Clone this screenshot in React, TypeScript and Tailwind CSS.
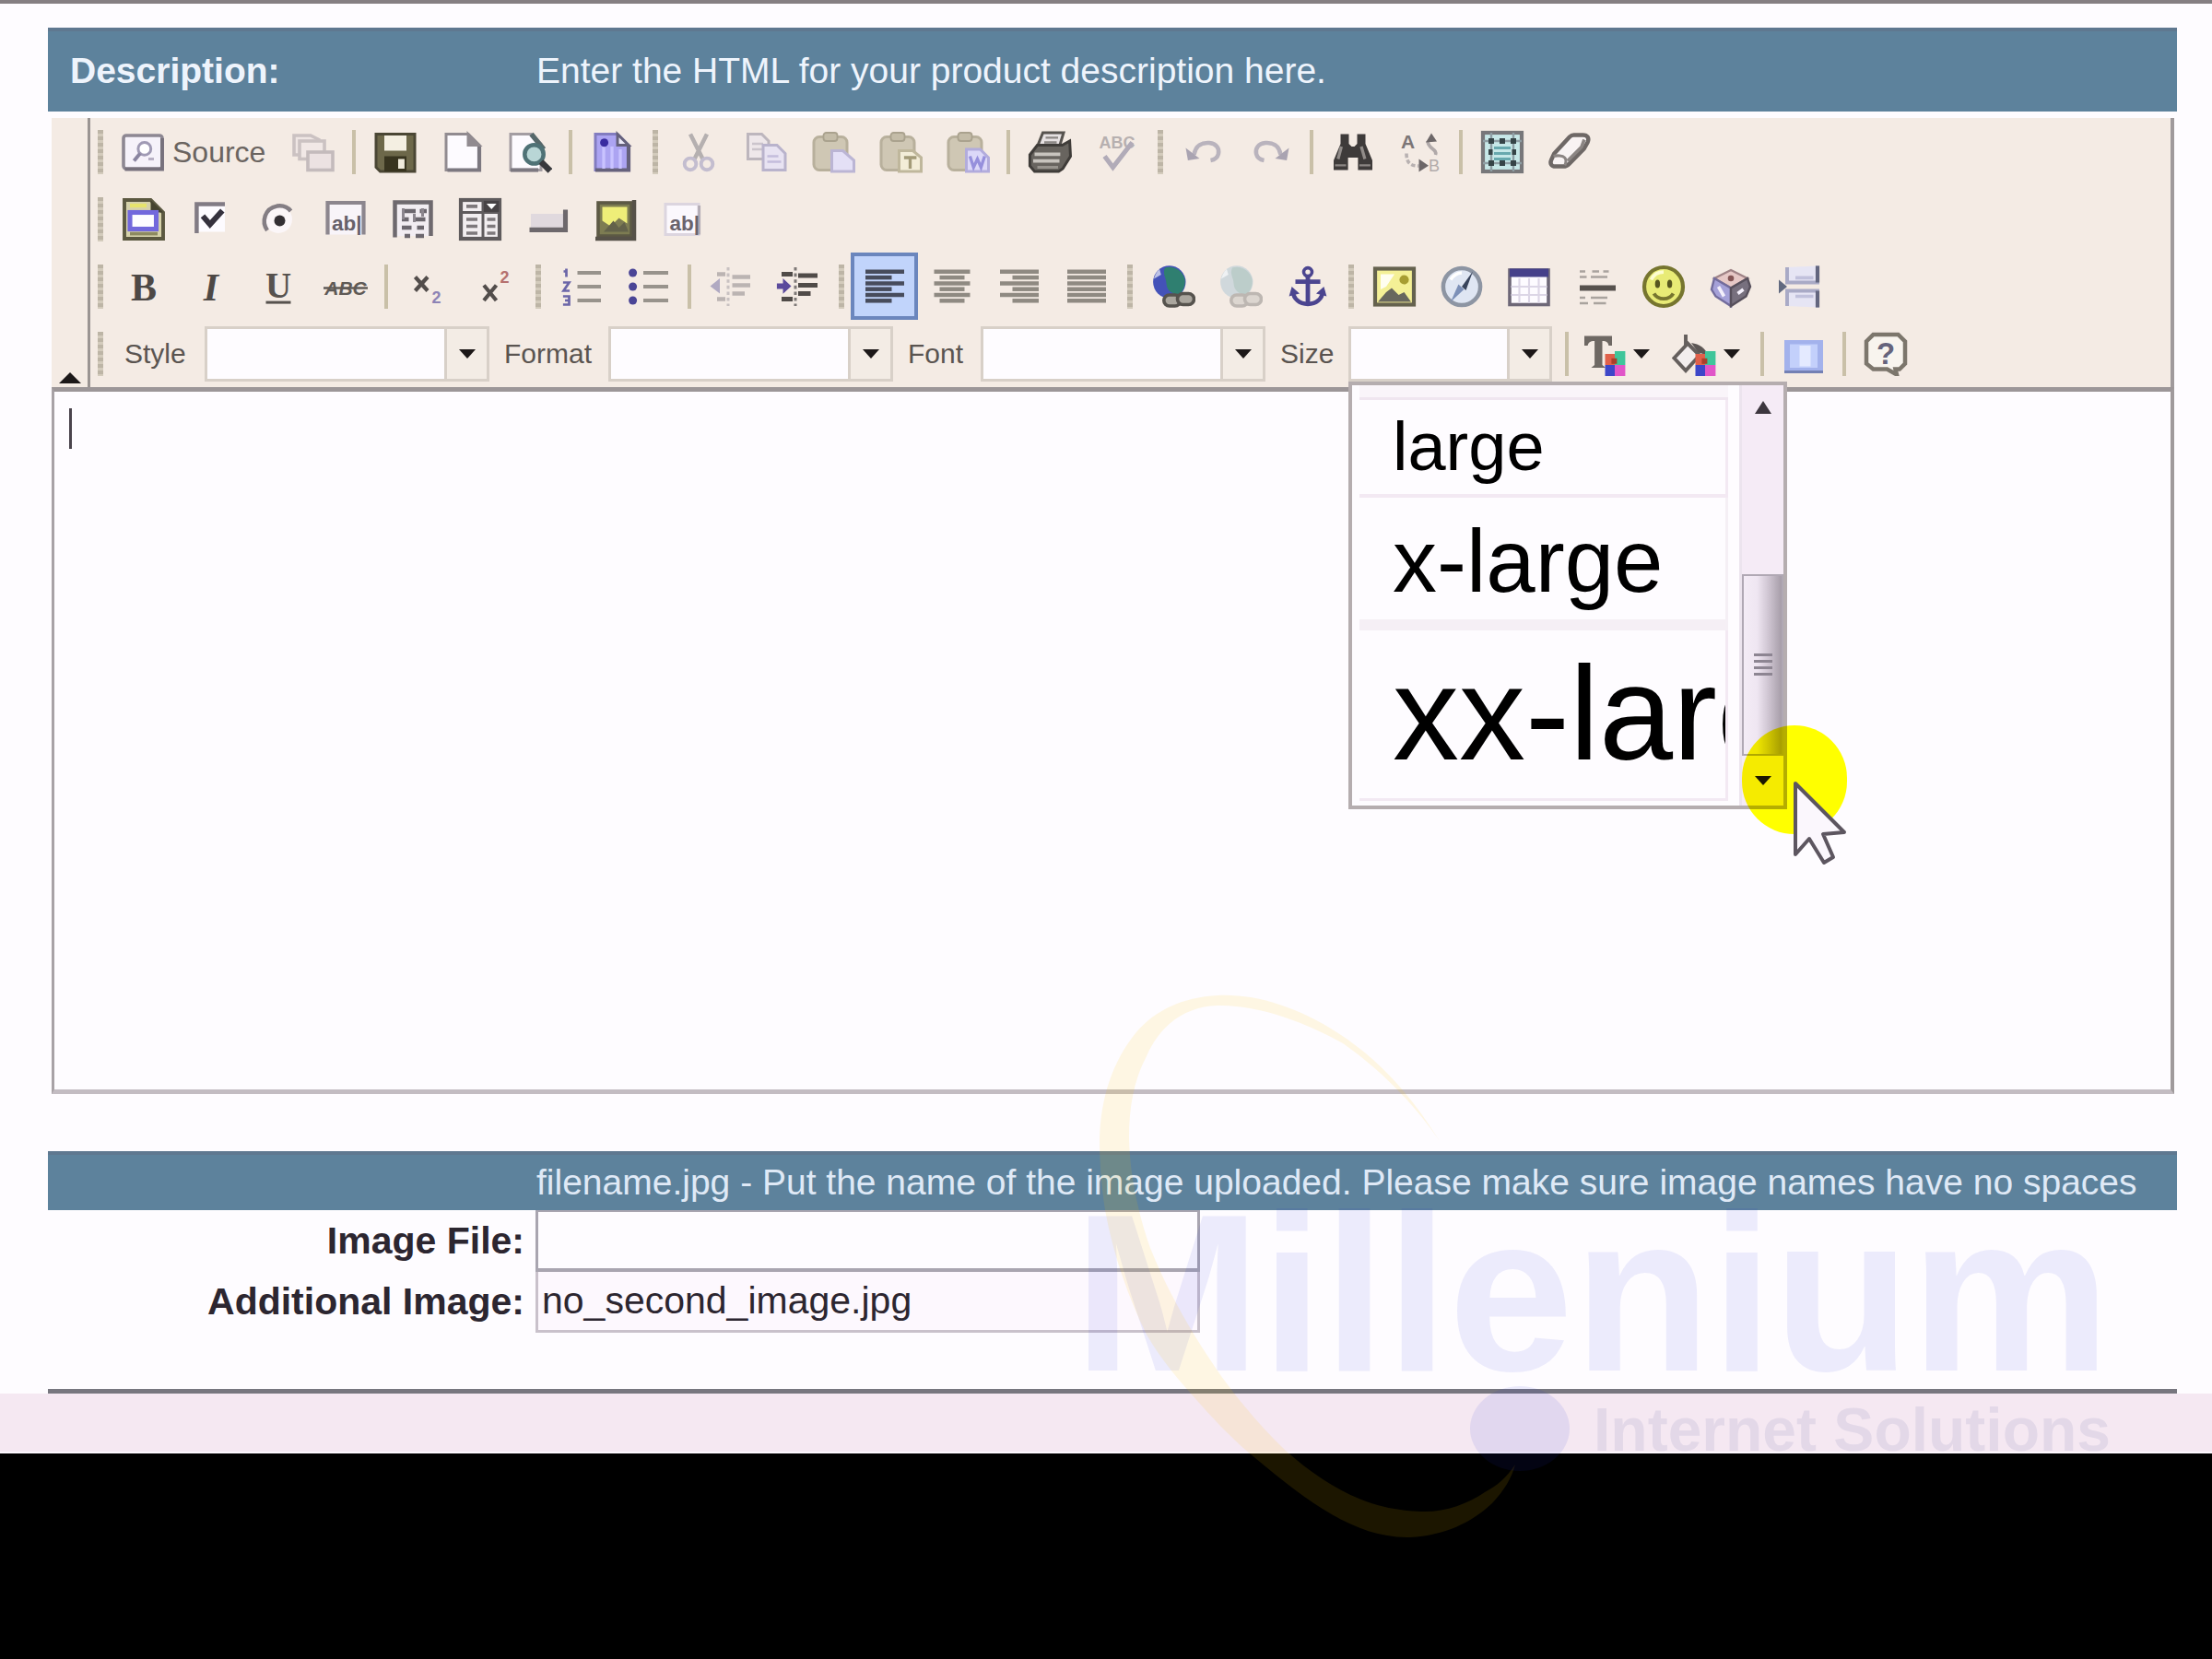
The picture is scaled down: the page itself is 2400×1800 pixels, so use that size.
import React from "react";

const SERIF = '"Liberation Serif", serif';
const SANS = '"Liberation Sans", sans-serif';

function Icon({ children }: { children: React.ReactNode }) {
  return (
    <svg viewBox="0 0 16 16" className="h-12 w-12 shrink-0" fill="none" aria-hidden="true">
      {children}
    </svg>
  );
}

function Tool({ label, active, children }: { label: string; active?: boolean; children: React.ReactNode }) {
  return (
    <button
      type="button"
      aria-label={label}
      title={label}
      className={
        active
          ? "flex h-[73px] w-[73px] shrink-0 items-center justify-center border-4 border-[#6b86bd] bg-[#c1d4fb]"
          : "flex h-[73px] w-[73px] shrink-0 items-center justify-center"
      }
    >
      <Icon>{children}</Icon>
    </button>
  );
}

function Grip() {
  return (
    <span className="flex w-[21px] shrink-0 items-center justify-center">
      <span className="h-12 w-[6px] bg-[repeating-linear-gradient(to_bottom,#bdb5a6_0px,#bdb5a6_4px,#d3cbbc_4px,#d3cbbc_7px)]" />
    </span>
  );
}

function Sep() {
  return (
    <span className="flex w-4 shrink-0 items-center justify-center">
      <span className="h-12 w-1 bg-[#c9c0a8]" />
    </span>
  );
}

function Row({ children }: { children: React.ReactNode }) {
  return (
    <div className="flex h-[73px] items-center">
      <Grip />
      {children}
    </div>
  );
}

function Arrow() {
  return (
    <svg viewBox="0 0 18 10" className="h-[10px] w-[18px]" aria-hidden="true">
      <path d="M0 0h18L9 10z" fill="#1c1818" />
    </svg>
  );
}

function Combo({
  id,
  label,
  labelClass,
  width,
  children,
}: {
  id: string;
  label: string;
  labelClass: string;
  width: string;
  children?: React.ReactNode;
}) {
  return (
    <>
      <label htmlFor={id} className={"shrink-0 text-[30px] text-[#5a5450] " + labelClass}>
        {label}
      </label>
      <div className={"relative h-[60px] shrink-0 " + width}>
        <select
          id={id}
          className="h-full w-full appearance-none border-[3px] border-[#d8d0c8] bg-[#fefcff] px-3 text-[30px] outline-none"
        >
          <option value="" />
        </select>
        <span className="pointer-events-none absolute inset-y-[3px] right-[3px] flex w-[46px] items-center justify-center border-l-[3px] border-[#d8d0c8] bg-[#f3ece5]">
          <Arrow />
        </span>
        {children}
      </div>
    </>
  );
}

const page = (stroke: string) => (
  <>
    <path d="M2 1.5h8l4 4v9H2z" fill="#fdfbff" stroke={stroke} />
    <path d="M10 1.5v4h4z" fill={stroke} stroke={stroke} />
    <path d="M2.5 14.5h11.5V6" stroke="#7c7880" strokeWidth="1.4" />
  </>
);

const clipboard = (
  <>
    <rect x="1" y="2.5" width="12" height="12" rx="2" fill="#cfc7b4" stroke="#b8b09c" />
    <rect x="4.5" y="1" width="5" height="3" rx="1" fill="#c4bca8" stroke="#aaa28e" strokeWidth=".6" />
  </>
);

const swatches = (
  <>
    <path d="M8.5 8h3.5v4H8.5z" fill="#e0604a" />
    <path d="M12 7h3.8v5H12z" fill="#3fc59a" />
    <path d="M8.5 12H12v4H8.5z" fill="#3d46c8" />
    <path d="M12 12h3.8v4H12z" fill="#e055c8" />
    <path d="M10.8 9.6h2v2h-2z" fill="#a8402a" />
  </>
);

const globe = (sea: string, land: string, link: string, linkFill: string) => (
  <>
    <circle cx="6.6" cy="6.3" r="5.9" fill={sea} />
    <path d="M5 1.2c3-1 6.5 1 7.2 4.2.3 2.2-.6 4.2-2.2 5.6-2.8-.4-4.4-1.8-4.5-4.2C5.4 4.6 4 3.5 5 1.2z" fill={land} />
    <path d="M3 1.7c-1 1-1.7 2.2-2 3.5l2.6-1.5z" fill="#fff" opacity=".65" />
    <rect x="4.6" y="11" width="6" height="4" rx="2" fill={linkFill} stroke={link} strokeWidth="1.2" />
    <rect x="9.5" y="10.5" width="6" height="4" rx="2" fill={linkFill} stroke={link} strokeWidth="1.2" />
  </>
);

/* Six text rows, alternating between a wide and a narrow extent. */
const lines = (wide: [number, number], narrow: [number, number], color: string) => (
  <>
    {[0, 1, 2, 3, 4, 5].map((i) => {
      const [from, to] = i % 2 === 0 ? wide : narrow;
      return <path key={i} d={`M${from} ${2.6 + i * 2.1}H${to}`} stroke={color} strokeWidth="1.5" />;
    })}
  </>
);

function Toolbar() {
  return (
    <div className="flex border-r-4 border-[#a09a9c] bg-[#f4ebe4]">
      <button
        type="button"
        aria-label="Collapse toolbar"
        className="flex w-[42px] shrink-0 items-end justify-center border-r-[3px] border-[#9a9492] pb-1"
      >
        <svg viewBox="0 0 24 12" className="h-3 w-6" aria-hidden="true">
          <path d="M0 12 12 0l12 12z" fill="#1c1818" />
        </svg>
      </button>
      <div className="min-w-0 flex-1">
        <Row>
          <button type="button" className="flex h-[73px] w-[184px] shrink-0 items-center gap-2 pl-3 text-[32px] text-[#6a6460]">
            <Icon>
              <rect x="1" y="2" width="14" height="12" rx="1" fill="#f6f2fa" stroke="#8d8792" strokeWidth="1.2" />
              <path d="M1.5 14.2H15V3" stroke="#77717c" strokeWidth="1.3" />
              <circle cx="8.6" cy="6.8" r="2.3" fill="#fff" stroke="#a09ab4" />
              <path d="M7 8.5 4.8 11.2" stroke="#8a84a0" strokeWidth="1.3" />
              <path d="M10 10.5h2" stroke="#b8b0c4" />
            </Icon>
            Source
          </button>
          <Tool label="Templates">
            <path d="M1 2h6l3 1.500V9H1z" fill="#efe6e4" stroke="#cbc2c2" strokeWidth="1.2" />
            <rect x="3" y="4" width="9" height="6.5" fill="#f1e8e6" stroke="#cbc2c2" strokeWidth="1.2" />
            <rect x="6" y="8" width="9" height="6.5" fill="#ece2e2" stroke="#c4bbbc" strokeWidth="1.2" />
          </Tool>
          <Sep />
          <Tool label="Save">
            <path d="M1 1.500h14V15H2.500L1 13.500z" fill="#6d684a" stroke="#4a4634" />
            <rect x="4" y="2" width="8" height="5.5" fill="#f4efe2" />
            <rect x="4" y="9.5" width="8" height="5.5" fill="#38341f" />
            <rect x="9" y="10.5" width="2.3" height="3.5" fill="#f0ebdc" />
          </Tool>
          <Tool label="New page">{page("#918b90")}</Tool>
          <Tool label="Preview">
            <path d="M1 1.500h7.500l3.500 3.500v9.500H1z" fill="#fdfbff" stroke="#a39da2" />
            <path d="M1 14.500h10" stroke="#7c7880" strokeWidth="1.4" />
            <path d="M8.500 1.500 13 7" stroke="#56686a" strokeWidth="1.8" />
            <circle cx="9.5" cy="8.8" r="3.4" fill="#b9d6d6" stroke="#4f7276" strokeWidth="1.5" />
            <path d="m12 11.500 3.300 3.300" stroke="#38383c" strokeWidth="2.2" />
          </Tool>
          <Sep />
          <Tool label="Document templates">
            <path d="M2 1.500h8l4 4v9H2z" fill="#aca4f2" stroke="#827cc0" />
            <path d="M10 1.500v4h4z" fill="#eceaf8" stroke="#65617c" />
            <path d="M14 5.500v9H2" stroke="#65617c" strokeWidth="1.4" />
            <path d="M5 3v11M8 6v8M11 7v7" stroke="#c9c3ff" strokeWidth="1.1" />
            <circle cx="5.2" cy="4.6" r="1.5" fill="#3a2ca0" />
          </Tool>
          <Grip />
          <Tool label="Cut">
            <path d="m5 1.500 4.500 9M11 1.500l-4.500 9" stroke="#b5b0b0" strokeWidth="1.5" />
            <circle cx="5" cy="12.3" r="2.1" stroke="#c3bdcf" strokeWidth="1.3" />
            <circle cx="11" cy="12.3" r="2.1" stroke="#c3bdcf" strokeWidth="1.3" />
          </Tool>
          <Tool label="Copy">
            <path d="M1.500 1.500h5L9 4v6.500H1.500z" fill="#eee7ea" stroke="#bdb6bd" />
            <path d="M3 5h4M3 7h4" stroke="#cbc4cc" strokeWidth=".8" />
            <path d="M7 5.500h5l3 3v6H7z" fill="#e8e3f2" stroke="#b9b3cc" />
            <path d="M8.500 9.500h4M8.500 11.500h5" stroke="#c3bddb" strokeWidth=".8" />
          </Tool>
          <Tool label="Paste">
            {clipboard}
            <path d="M7.500 7.500h4L15.500 11v4h-8z" fill="#e4e0f6" stroke="#bbb5d4" />
          </Tool>
          <Tool label="Paste as plain text">
            {clipboard}
            <path d="M7.500 7.500h5L15.500 10v5h-8z" fill="#f3edd8" stroke="#bfb79c" />
            <path d="M9.300 10h4.500M11.500 10v4" stroke="#a39b78" strokeWidth="1.1" />
          </Tool>
          <Tool label="Paste from Word">
            {clipboard}
            <path d="M7.500 7h5L15.500 10v5h-8z" fill="#dcd8f8" stroke="#b2acdc" />
            <path d="m8.800 9.500 1.300 4 1.400-3 1.300 3 1.300-4" stroke="#9690dc" strokeWidth="1.1" />
          </Tool>
          <Sep />
          <Tool label="Print">
            <path d="M5.500 1h7.500l-1.500 5h-8z" fill="#e6e1e2" stroke="#57534f" />
            <path d="M6.500 2.800h4.500M6 4.500h4.500" stroke="#8b8684" strokeWidth=".8" />
            <path d="m.8 9 2.700-3.500h9l2.700-1.500.3 5.500-2.800 4.500-1.500 1H2.500L.8 13z" fill="#68645f" stroke="#3f3c39" />
            <path d="M2.500 8.800h9.300M2 11.200h9.500" stroke="#c8c4be" strokeWidth="1.2" />
            <path d="M3.500 13.500h7.500" stroke="#98948e" />
          </Tool>
          <Tool label="Check spelling">
            <text x="1.5" y="6.5" fontFamily={SANS} fontWeight="bold" fontSize="6" fill="#b7b0b0">ABC</text>
            <path d="m3.500 9.500 3 4 7-9" stroke="#b1abb8" strokeWidth="1.7" />
          </Tool>
          <Grip />
          <Tool label="Undo">
            <path d="M4.500 9C5 5.500 7.500 4.500 10 4.700c2.600.3 3.800 2 3.300 4-.3 1.200-1.200 2-2.800 2.300" stroke="#b9b3bd" strokeWidth="1.5" />
            <path d="M1.500 6.500 2.300 11l4.200-.7z" fill="#a9a3b1" />
          </Tool>
          <Tool label="Redo">
            <path d="M11.500 9C11 5.500 8.500 4.500 6 4.700c-2.600.3-3.800 2-3.300 4 .3 1.200 1.200 2 2.800 2.300" stroke="#b9b3bd" strokeWidth="1.5" />
            <path d="M14.500 6.500 13.700 11l-4.200-.7z" fill="#a9a3b1" />
          </Tool>
          <Sep />
          <Tool label="Find">
            <path d="M3.500 1.500h3V5l1 1h1l1-1V1.500h3V5l2.500 6v3.500H9.800V10H6.200v4.500H1V11l2.500-6z" fill="#3e3b3a" />
            <path d="M3.800 6 2.600 10.500M11 6l1.300 4.500" stroke="#918c89" strokeWidth="1.1" />
            <path d="M1.500 12.800h4M10.300 12.800h4" stroke="#8b8683" strokeWidth=".8" />
          </Tool>
          <Tool label="Replace">
            <text x="1" y="6.8" fontFamily={SANS} fontWeight="bold" fontSize="7" fill="#7c7677">A</text>
            <path d="M3 8.500c0 3.500 1.500 4.500 4.500 4.500" stroke="#b8b1b1" strokeWidth="1.2" strokeDasharray="1.5 .8" />
            <path d="m7.500 10.500 3.500 2.400-3.500 2.300z" fill="#6d6768" />
            <path d="M13.500 9c.8-2.200-2.800-2-2.800-5" stroke="#b0a9a9" strokeWidth="1.2" />
            <path d="m10 4.500 2-3.300 2 3z" fill="#6d6768" />
            <text x="11" y="15" fontFamily={SANS} fontSize="6" fill="#b2abab">B</text>
          </Tool>
          <Sep />
          <Tool label="Select all">
            <rect x="1" y="1" width="14" height="14" fill="#c7e8e8" stroke="#77777a" strokeWidth="1.4" />
            <path d="M4 1v14M12 1v14M1 4h14M1 12h14" stroke="#8e9ea4" strokeWidth=".8" />
            <path d="M5 6.500h6M5 8.500h6M5 10.500h6" stroke="#68a9ae" />
            <path d="M3 3h2v2H3zM7 3h2v2H7zM11 3h2v2h-2zM3 7h1.500v2H3zM11.500 7H13v2h-1.500zM3 11h2v2H3zM7 11h2v2H7zM11 11h2v2h-2z" fill="#364447" />
          </Tool>
          <Tool label="Remove format">
            <path d="M9.500 1.800h3.300c1.700 0 2.400 1.200 1.700 2.700l-1.300 2.300L7.800 12.300c-.6.600-1.200.9-2 .9H2.900c-1.500 0-2.100-1-1.500-2.400l1-2.200L8 2.500c.5-.5.900-.7 1.500-.7z" fill="#f8f3f3" stroke="#6e6866" strokeWidth="1.5" />
            <path d="M2.200 9.500c1.300-.4 3.300-.2 4 .5.600.6.500 1.800.1 2.800" stroke="#8b8583" />
            <path d="m13.300 3.500-1 2.700-5 5" stroke="#8b8583" strokeWidth="1.2" />
          </Tool>
        </Row>

        <Row>
          <Tool label="Form">
            <path d="M1 1h9.500L15 5.500V15H1z" fill="#d6d2aa" stroke="#5b5840" strokeWidth="1.3" />
            <path d="M10.500 1v4.500H15z" fill="#45432f" />
            <path d="M3 3h6" stroke="#e6e46c" strokeWidth="1.4" />
            <rect x="3" y="5.5" width="9.5" height="6" fill="#fdfcff" stroke="#7268dc" strokeWidth="1.7" />
            <path d="M3 13.200h10" stroke="#8d8a60" strokeWidth="1.2" />
          </Tool>
          <Tool label="Checkbox">
            <rect x="3" y="2.5" width="10" height="10" fill="#fdfbff" />
            <path d="M2.800 13V2.500H13" stroke="#817b84" strokeWidth="1.5" />
            <path d="m5 6.800 2.600 3 4.500-5" stroke="#35313d" strokeWidth="2" />
          </Tool>
          <Tool label="Radio button">
            <circle cx="8" cy="8" r="5" fill="#fbf6f8" />
            <path d="M4 12c-2.200-3-1-8 3.500-8.800 2-.3 3.800.3 5 1.800" stroke="#847e84" strokeWidth="1.5" />
            <circle cx="8.5" cy="8.5" r="2" fill="#332f33" />
          </Tool>
          <Tool label="Text field">
            <rect x="1.5" y="2" width="13" height="11.5" fill="#f8f4f9" />
            <path d="M1.500 13.500V2h13v11.500" stroke="#8c868e" strokeWidth="1.4" />
            <text x="3" y="12" fontFamily={SANS} fontWeight="bold" fontSize="7.5" fill="#67616a">ab|</text>
          </Tool>
          <Tool label="Textarea">
            <rect x="1.5" y="2" width="13" height="12" fill="#f2edf2" />
            <path d="M1.500 14.500V1.800h13V14" stroke="#6e696e" strokeWidth="1.5" />
            <path d="M4 5h5M10.500 5h2.500M4 8h2.500M8 8h4.500M4 11h3.500M9.500 11h2.500M5 14h2M9 14h3" stroke="#6c676e" strokeWidth="1.5" />
            <path d="M4.500 4v4M8.500 6v3M11.500 4v3" stroke="#8c868e" />
          </Tool>
          <Tool label="Selection field">
            <rect x="1" y="1" width="14" height="14" fill="#f2eef0" stroke="#5f5b5d" strokeWidth="1.4" />
            <path d="M9 1v14M1 5.500h14" stroke="#5f5b5d" />
            <rect x="9.3" y="1.3" width="5.5" height="4" fill="#474345" />
            <path d="m10.300 2.300 1.800 2 1.800-2z" fill="#fff" />
            <path d="M3 3.300h4M3 8h4M3 10.500h4M3 13h4M10.500 8h3M10.500 10.500h3M10.500 13h3" stroke="#7e797c" strokeWidth="1.2" />
          </Tool>
          <Tool label="Button">
            <rect x="2" y="6" width="12" height="5.5" fill="#e0d9de" />
            <path d="M1.500 11.800h13V4.500" stroke="#6d686c" strokeWidth="1.7" />
          </Tool>
          <Tool label="Image button">
            <rect x="2" y="2" width="12" height="12" fill="#7d7c52" stroke="#5c5944" strokeWidth="1.2" />
            <path d="M3.500 3.500h9v6l-3-2-3 3-3-2z" fill="#eeee78" />
            <path d="m4 12.500 3.500-4 2 2.500 2-2 1.500 3.500z" fill="#63624a" />
            <path d="M1 15h14V1" stroke="#565148" strokeWidth="1.5" />
          </Tool>
          <Tool label="Hidden field">
            <rect x="2" y="2.5" width="12" height="11" fill="#fbf8fd" stroke="#dcd5df" />
            <path d="M14.200 3v10.500" stroke="#b3acb5" />
            <text x="3.5" y="12" fontFamily={SANS} fontWeight="bold" fontSize="7.5" fill="#6a636c">ab|</text>
          </Tool>
        </Row>

        <Row>
          <Tool label="Bold">
            <text x="8" y="13" textAnchor="middle" fontFamily={SERIF} fontWeight="bold" fontSize="14" fill="#4d4845">B</text>
          </Tool>
          <Tool label="Italic">
            <text x="8" y="13" textAnchor="middle" fontFamily={SERIF} fontWeight="bold" fontStyle="italic" fontSize="14" fill="#4d4845">I</text>
          </Tool>
          <Tool label="Underline">
            <text x="8" y="12" textAnchor="middle" fontFamily={SERIF} fontWeight="bold" fontSize="13" fill="#57524e">U</text>
            <path d="M3.500 13.700h9" stroke="#57524e" />
          </Tool>
          <Tool label="Strike through">
            <text x="8" y="11" textAnchor="middle" fontFamily={SANS} fontWeight="bold" fontStyle="italic" fontSize="7" fill="#5f5a56">ABC</text>
            <path d="M0 8.500h16" stroke="#5f5a56" strokeWidth=".8" />
          </Tool>
          <Sep />
          <Tool label="Subscript">
            <path d="m3.500 4.500 4.500 5M8 4.500l-4.500 5" stroke="#524d4b" strokeWidth="1.4" />
            <text x="9.5" y="14" fontFamily={SANS} fontWeight="bold" fontSize="6" fill="#8d83b5">2</text>
          </Tool>
          <Tool label="Superscript">
            <path d="m4 7.500 4.500 5.500M8.500 7.500 4 13" stroke="#524d4b" strokeWidth="1.4" />
            <text x="9.8" y="6.5" fontFamily={SANS} fontWeight="bold" fontSize="6" fill="#b5716f">2</text>
          </Tool>
          <Grip />
          <Tool label="Numbered list">
            <path d="M2.500 1.500v3M1.500 2.500h1M1.300 6.500h2.200l-2 3h2.200M1.300 11.500h2.200v3H1.300M2 13h1.500" stroke="#6b66a8" strokeWidth=".9" />
            <path d="M6.500 3H15M6.500 8H15M6.500 13H15" stroke="#98938c" strokeWidth="1.3" />
          </Tool>
          <Tool label="Bulleted list">
            <circle cx="2.2" cy="3" r="1.5" fill="#4a4596" />
            <circle cx="2.2" cy="8" r="1.5" fill="#4a4596" />
            <circle cx="2.2" cy="13" r="1.5" fill="#4a4596" />
            <path d="M6 3h9M6 8h9M6 13h9" stroke="#98938c" strokeWidth="1.3" />
          </Tool>
          <Sep />
          <Tool label="Decrease indent">
            <path d="M7 1v14" stroke="#c8c1c1" strokeDasharray="1.2 1" />
            <path d="M8.500 4.500H15M8.500 7.500H15M8.500 10.500h4.500M3 3.500h3M3 12.500h3" stroke="#bbb4b2" strokeWidth="1.5" />
            <path d="M.5 7.800 4 5v5.500z" fill="#b0a9c2" />
          </Tool>
          <Tool label="Increase indent">
            <path d="M7 1v14" stroke="#7d7876" strokeDasharray="1.2 1" />
            <path d="M8 4H15M8 7.500H15M8 10.500h4.500M2 3.500h4M2 12.500h4" stroke="#504b48" strokeWidth="1.6" />
            <path d="M5.500 7.800 2.500 5v1.800H.3v2h2.200v1.800z" fill="#5b4a9c" />
          </Tool>
          <Grip />
          <Tool label="Align left" active>{lines([1, 15], [1, 10.5], "#474c5c")}</Tool>
          <Tool label="Align center">{lines([1.5, 14.5], [3.5, 12.5], "#8f8a82")}</Tool>
          <Tool label="Align right">{lines([1, 15], [5.5, 15], "#8f8a82")}</Tool>
          <Tool label="Justify">{lines([1, 15], [1, 15], "#8f8a82")}</Tool>
          <Grip />
          <Tool label="Insert link">{globe("#4452b8", "#2f7f70", "#56534e", "#aaa69e")}</Tool>
          <Tool label="Remove link">{globe("#d0d8dc", "#bccdca", "#bdb7b2", "#dcd6d0")}</Tool>
          <Tool label="Anchor">
            <circle cx="8" cy="2.7" r="1.5" stroke="#4b4590" strokeWidth="1.2" />
            <path d="M8 4v10.500M3.500 6.200h9" stroke="#4b4590" strokeWidth="1.6" />
            <path d="M2.500 9.500c.3 3 2.500 4.800 5.500 4.800s5.200-1.800 5.500-4.800" stroke="#4b4590" strokeWidth="1.5" />
            <path d="m1.200 11.500 1-3.500 2.800 2.500zM14.800 11.500l-1-3.500L11 10.500z" fill="#4b4590" />
          </Tool>
          <Grip />
          <Tool label="Image">
            <rect x="1" y="1.5" width="14" height="13" fill="#f4f096" stroke="#65624e" strokeWidth="1.4" />
            <path d="M3 3.500h5L5 8 3 9z" fill="#fffef0" />
            <circle cx="11.5" cy="5.5" r="1.7" fill="#a79d32" />
            <path d="m2 13.500 3-3.500 2-1.500 2.500 2.500 2-1 2.500 3.500z" fill="#68675e" />
          </Tool>
          <Tool label="Flash">
            <circle cx="8" cy="8" r="6.7" fill="#dfe6f3" stroke="#8d95a3" strokeWidth="1.5" />
            <path d="M4 5.500A5 5 0 0 1 8 3" stroke="#fff" strokeWidth="1.2" />
            <path d="m12 2.500-2.500 6.800L8 8z" fill="#38445c" />
            <path d="m4 13.500 2.800-6.300L8.800 9z" fill="#7c90b8" />
          </Tool>
          <Tool label="Table">
            <rect x="1" y="2" width="14" height="12.5" fill="#fdfbff" stroke="#6d6777" strokeWidth="1.2" />
            <rect x="1" y="1.5" width="14" height="3" fill="#45408a" />
            <path d="M4.500 5v9M8 5v9M11.500 5v9M1.500 8h13M1.500 11h13" stroke="#dcd6e6" strokeWidth=".7" />
          </Tool>
          <Tool label="Horizontal line">
            <path d="M2 2.500h2M6.500 2.500H9M10.500 2.500h2M2 4.500h2.500M6 4.500h6M2 12h2M6 12h6M2 14h3M7 14h4.500" stroke="#a9a39e" strokeWidth=".9" />
            <path d="M2 8.500h13" stroke="#57524e" strokeWidth="2" />
          </Tool>
          <Tool label="Smiley">
            <circle cx="8" cy="8" r="7" fill="#e8eb76" stroke="#76752f" strokeWidth="1.4" />
            <path d="M3.500 5.500C4.500 3.500 6 2.700 8 2.700" stroke="#fdfdd0" strokeWidth="1.2" />
            <ellipse cx="5.8" cy="7" rx=".9" ry="1.5" fill="#57561f" />
            <ellipse cx="10.2" cy="7" rx=".9" ry="1.5" fill="#57561f" />
            <path d="M4.500 10.500c1.500 2.500 5.500 2.500 7 0" stroke="#76752f" strokeWidth="1.3" />
          </Tool>
          <Tool label="Special character">
            <path d="m8 2 6 3-6 3.500L2 5z" fill="#e6c8c6" stroke="#9f8386" strokeWidth=".8" />
            <path d="m2 5 6 3.500V15l-5.500-3.500L1 9z" fill="#a5a1d8" stroke="#726c9c" strokeWidth=".8" />
            <path d="M14 5 8 8.500V15l5.500-3.500L15 8z" fill="#77707e" stroke="#57505c" strokeWidth=".8" />
            <path d="m3.500 8 2 3.500M10.500 10.500l2-1.500" stroke="#f4f0fb" strokeWidth="1.2" />
            <circle cx="8" cy="5" r="1.1" fill="#845656" />
          </Tool>
          <Tool label="Page break">
            <path d="M4 1v5.500h11V.5M4 15V9.500h11v6" fill="#e6e5f4" stroke="#a9aac6" strokeWidth="1.3" />
            <path d="M15 .5v6M15 9.500v6" stroke="#63667f" strokeWidth="1.4" />
            <path d="M7 4.800h6.500M7 11.500h6.500" stroke="#c1c1dc" strokeWidth="1.2" />
            <path d="M1 5.500 4 8l-3 2.500z" fill="#626a80" />
          </Tool>
        </Row>

        <Row>
          <Combo id="style" label="Style" labelClass="w-[103px] pl-4" width="w-[309px]" />
          <Combo id="format" label="Format" labelClass="w-[129px] pl-4" width="w-[309px]" />
          <Combo id="font" label="Font" labelClass="w-[95px] pl-4" width="w-[309px]" />
          <Combo id="size" label="Size" labelClass="w-[90px] pl-4" width="w-[221px]">
            <SizeMenu />
          </Combo>
          <span className="w-2 shrink-0" />
          <Sep />
          <button type="button" aria-label="Text color" className="flex h-[73px] w-[98px] shrink-0 items-center gap-2 pl-2">
            <Icon>
              <path d="M1 1.500h10V5H9.800c-.2-1.200-.7-1.700-2.300-1.700V12l1.200 1H3.500l1.200-1V3.300C3 3.300 2.500 3.800 2.200 5H1z" fill="#6e6863" />
              {swatches}
            </Icon>
            <Arrow />
          </button>
          <button type="button" aria-label="Background color" className="flex h-[73px] w-[98px] shrink-0 items-center gap-2 pl-2">
            <Icon>
              <path d="M5 1v4L.8 9.500 5 14l5-5.500L5 3.500" fill="#f3eeee" stroke="#655f5d" strokeWidth="1.3" />
              <path d="M7 4c3 .5 5 1.700 6 4.500L9.500 7.500z" fill="#5d5755" />
              {swatches}
            </Icon>
            <Arrow />
          </button>
          <Sep />
          <Tool label="Fit window">
            <rect x="1" y="3" width="14" height="12" fill="#a3b2ec" />
            <rect x="3" y="4.5" width="10" height="8.5" fill="#c3d0fb" />
            <rect x="6.5" y="5" width="4" height="7.5" fill="#e4eaff" />
            <path d="M1 14.500h14" stroke="#7380b4" />
          </Tool>
          <Sep />
          <Tool label="About">
            <path d="M3.500 1h9L15 3.500v8L13 13.500h-1.500L12 15.500 8.500 13.500H3.500L1 11.500v-8z" fill="#f8f4ee" stroke="#7c766c" strokeWidth="1.5" />
            <text x="8" y="11.5" textAnchor="middle" fontFamily={SANS} fontWeight="bold" fontSize="11" fill="#66647c">?</text>
          </Tool>
        </Row>
      </div>
    </div>
  );
}

function SizeMenu() {
  return (
    <div className="absolute left-0 top-full z-10 flex h-[464px] w-[476px] border-4 border-[#b5adaf] bg-[#fefcff]">
      <div role="listbox" aria-label="Font sizes" className="min-w-0 flex-1 overflow-hidden pl-2 pr-3 text-black">
        <div className="h-4 border-b-[3px] border-[#f0e6f0] bg-[#faf5fa]" />
        <button
          type="button"
          role="option"
          aria-selected="false"
          className="block h-[106px] w-full overflow-hidden whitespace-nowrap border-b-4 border-r-[3px] border-[#f3e9f3] pl-9 text-left text-[74px] leading-[100px]"
        >
          large
        </button>
        <button
          type="button"
          role="option"
          aria-selected="false"
          className="block h-[144px] w-full overflow-hidden whitespace-nowrap border-b-[12px] border-r-[3px] border-[#f5eff5] pl-9 text-left text-[96px] leading-[138px]"
        >
          x-large
        </button>
        <button
          type="button"
          role="option"
          aria-selected="false"
          className="block h-[185px] w-full overflow-hidden whitespace-nowrap border-b-[3px] border-r-[3px] border-[#f3e9f3] pl-9 text-left text-[144px] leading-[182px]"
        >
          xx-large
        </button>
      </div>
      <div className="flex w-[48px] flex-col border-l-[3px] border-[#ece4ee] bg-[#f5ebf6]">
        <button type="button" aria-label="Scroll up" className="flex h-12 items-center justify-center">
          <svg viewBox="0 0 18 14" className="h-[14px] w-[18px]" aria-hidden="true">
            <path d="M0 14 9 0l9 14z" fill="#3c363e" />
          </svg>
        </button>
        <div className="flex-1" />
        <div className="flex h-[197px] flex-col items-center justify-center gap-1 border-2 border-[#b0a8b4] bg-[linear-gradient(to_right,#f4ecf6_0%,#efe6f2_35%,#cfc5d2_65%,#a69da8_100%)]">
          <span className="h-[3px] w-5 bg-[#8d8592]" />
          <span className="h-[3px] w-5 bg-[#8d8592]" />
          <span className="h-[3px] w-5 bg-[#8d8592]" />
          <span className="h-[3px] w-5 bg-[#8d8592]" />
        </div>
        <button type="button" aria-label="Scroll down" className="flex h-[54px] items-center justify-center">
          <Arrow />
        </button>
      </div>
      <span className="pointer-events-none absolute left-[423px] top-[369px] h-[118px] w-[114px] rounded-full bg-[#ffff00] mix-blend-multiply" />
      <svg viewBox="0 0 60 96" className="pointer-events-none absolute left-[478px] top-[428px] h-24 w-[60px]" aria-hidden="true">
        <path d="M3 4v77l15-17 16 26 10-6-11-25 23-2z" fill="#fbf7fd" stroke="#5d5660" strokeWidth="4" strokeLinejoin="round" />
      </svg>
    </div>
  );
}

function Watermark() {
  return (
    <div aria-hidden="true" className="pointer-events-none absolute right-[98px] top-[1072px] h-[600px] w-[1130px] pr-3">
      <svg viewBox="0 0 1130 600" className="absolute inset-0 h-full w-full">
        <path
          d="M390 166C355 110 320 75 280 49 235 20 190 6 149 8 110 10 80 25 60 49 35 80 22 120 21 163 21 190 23 215 27 241 36 290 52 335 72 376 86 400 102 420 121 441 142 465 165 490 190 510 250 560 300 597 358 596 395 594 425 580 447 559 460 545 468 532 472 517 462 532 452 540 439 547 420 560 395 569 370 568 345 567 325 563 305 555 275 543 248 524 223 502 198 478 174 450 153 421 123 378 96 332 76 282 62 242 54 202 53 163 53 130 58 100 72 74 86 42 112 20 149 19 195 18 245 38 285 60 322 86 358 120 390 166z"
          fill="#ffc400"
          opacity=".11"
        />
        <ellipse cx="477" cy="478" rx="54" ry="46" fill="#1c28d8" opacity=".09" />
      </svg>
      <p className="flex h-[432px] items-end justify-end whitespace-nowrap text-[244px] font-bold leading-[202px] text-[#1c28d8]/8">
        Millenium
      </p>
      <p className="text-right text-[66px] font-bold leading-[94px] text-[#405090]/10">Internet Solutions</p>
    </div>
  );
}

export default function App() {
  return (
    <div className='relative flex min-h-screen flex-col overflow-hidden bg-[#fefcff] font-["Liberation_Sans",sans-serif]'>
      <div className="h-1 bg-[#857f82]" />
      <main className="pl-[52px] pr-[38px] pt-[26px]">
        <div className="flex h-[91px] items-center border-t-4 border-[#5f7890] bg-[#5d829c] pl-6 text-[39px] text-[#eef4fc]">
          <h2 className="w-[506px] shrink-0 font-bold">Description:</h2>
          <p>Enter the HTML for your product description here.</p>
        </div>

        <div className="ml-1 mr-[3px] mt-[7px]">
          <Toolbar />
          <div className="relative border-b-[5px] border-l-[3px] border-r-4 border-t-[5px] border-b-[#c3bcc2] border-l-[#a8a2a6] border-r-[#a09a9c] border-t-[#9c9698]">
            <textarea aria-label="Product description" className="block h-[757px] w-full resize-none bg-transparent p-4 text-[39px] outline-none" />
            <span className="absolute left-4 top-[18px] h-[44px] w-[3px] bg-[#4a444c]" />
          </div>
        </div>

        <div className="mt-[62px] flex h-16 items-center border-t-4 border-[#5f7890] bg-[#5d829c] pl-[530px] text-[39px] text-[#dfe9f6]">
          <p className="whitespace-nowrap">
            filename.jpg - Put the name of the image uploaded. Please make sure image names have no spaces
          </p>
        </div>

        <form className="grid grid-cols-[517px_721px] items-center gap-x-3 text-[41px] text-[#2c2630]">
          <label htmlFor="image-file" className="text-right font-bold">Image File:</label>
          <input
            id="image-file"
            type="text"
            className="h-[67px] border-b-4 border-l-[3px] border-r-[3px] border-t-2 border-[#a9a5b0] bg-[#fefcff] px-1 outline-none"
          />
          <label htmlFor="additional-image" className="text-right font-bold">Additional Image:</label>
          <input
            id="additional-image"
            type="text"
            defaultValue="no_second_image.jpg"
            className="h-[66px] border-b-[3px] border-l-[3px] border-r-[3px] border-[#c9c1cb] bg-[#fdf8fe] px-1 outline-none"
          />
        </form>
        <div className="mt-[61px] h-[5px] bg-[#77767f]" />
      </main>
      <div className="h-[65px] border-b-2 border-[#fdf8fe] bg-[#f5e8f2]" />
      <div className="flex-1 bg-black" />
      <Watermark />
    </div>
  );
}
